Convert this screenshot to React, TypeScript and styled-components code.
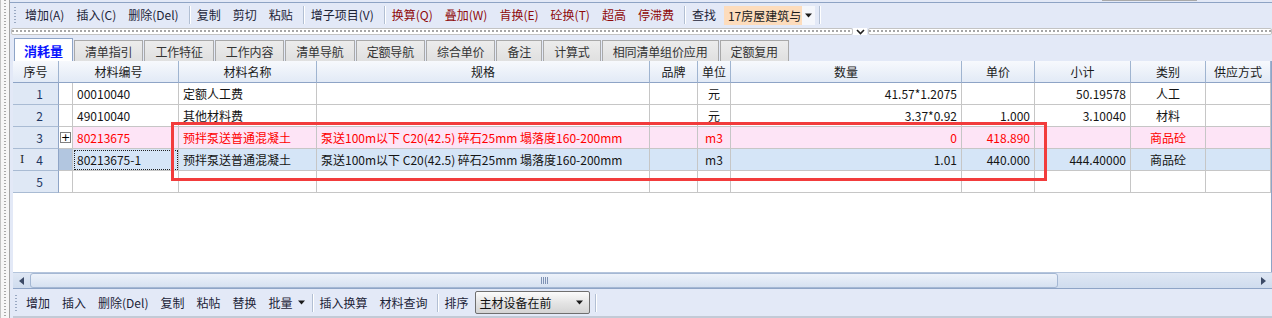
import React from "react";
import styled, { createGlobalStyle } from "styled-components";

const GlobalStyle = createGlobalStyle`
  html, body {
    margin: 0;
    padding: 0;
    background: #e3e9f7;
  }
  body {
    font-family: "Noto Sans CJK SC", "Microsoft YaHei", "Liberation Sans", sans-serif;
    font-size: 12px;
    color: #1c2437;
  }
`;

const cols = [46, 14, 106, 138, 333, 48, 33, 231, 73, 96, 75, 65];
const template = cols.map((c) => `${c}px`).join(" ");

const Frame = styled.div`
  position: relative;
  display: flex;
  width: 1272px;
  height: 318px;
  overflow: hidden;
  background: #e3e9f7;
`;

const SideGrip = styled.div`
  flex: none;
  width: 8px;
  border-left: 1px solid #c4c4c4;
  border-right: 1px solid #a3a3a3;
  background-color: #f6f6f6;
  background-image: repeating-linear-gradient(to bottom, #a8a8a8 0 1px, transparent 1px 3px);
  background-size: 2px 100%;
  background-position: 3px 0;
  background-repeat: no-repeat;
`;

const Main = styled.div`
  flex: 1;
  display: flex;
  flex-direction: column;
  min-width: 0;
`;

const TopEdge = styled.div`
  height: 2px;
  border-bottom: 1px solid #8ea3c4;
  display: flex;
`;

const Nub = styled.div`
  margin-left: 1092px;
  width: 95px;
  height: 1px;
  background: #a9a9a9;
`;

const Toolbar = styled.div<{ $h: number }>`
  height: ${(p) => p.$h}px;
  display: flex;
  align-items: center;
  padding-left: 4px;
  background: #e3e9f7;
  flex: none;
`;

const Grip = styled.div`
  width: 2px;
  height: 16px;
  margin-right: 3px;
  background-image: repeating-linear-gradient(to bottom, #9aa9c2 0 1px, transparent 1px 3px);
`;

const Item = styled.span<{ $red?: boolean }>`
  padding: 0 6px;
  line-height: 18px;
  white-space: nowrap;
  color: ${(p) => (p.$red ? "#8f0a0a" : "#1c2437")};
  display: inline-flex;
  align-items: center;
  gap: 5px;
`;

const Sep = styled.div<{ $lead?: number }>`
  width: 1px;
  height: 18px;
  margin: 0 1px 0 ${(p) => (p.$lead ?? 4)}px;
  background: #b2bfd3;
  box-shadow: 1px 0 0 #fff;
`;

const PeachCombo = styled.div`
  display: flex;
  height: 19px;
  margin-left: 2px;
`;

const PeachText = styled.div`
  width: 74px;
  padding-left: 4px;
  background: #fddcbc;
  line-height: 19px;
  white-space: nowrap;
  overflow: hidden;
  color: #1c1c1c;
`;

const DropBtn = styled.div`
  width: 13px;
  display: flex;
  align-items: center;
  justify-content: center;
  background: #f4f6fb;
`;

const Splitter = styled.div`
  height: 9px;
  display: flex;
  align-items: center;
  flex: none;
`;

const Dots = styled.div<{ $w?: number }>`
  ${(p) => (p.$w ? `width: ${p.$w}px;` : "flex: 1;")}
  height: 5px;
  margin-left: 1px;
  border: 1px solid #c3c3c3;
  border-radius: 2px;
  background-color: #ffffff;
  background-image: repeating-linear-gradient(to right, #a6a6a6 0 2px, transparent 2px 4px);
  background-size: 100% 2px;
  background-position: 0 1px;
  background-repeat: no-repeat;
`;

const ArrowBox = styled.div`
  width: 14px;
  height: 7px;
  display: flex;
  align-items: center;
  justify-content: center;
  background: #ffffff;
`;

const TabStrip = styled.div`
  height: 25px;
  display: flex;
  align-items: flex-end;
  padding-left: 4px;
  flex: none;
`;

const Tab = styled.div<{ $active?: boolean }>`
  height: ${(p) => (p.$active ? 23 : 21)}px;
  padding: 0 ${(p) => (p.$active ? 9 : 10)}px;
  margin-right: 1px;
  box-sizing: border-box;
  display: flex;
  align-items: center;
  justify-content: center;
  white-space: nowrap;
  border: 1px solid ${(p) => (p.$active ? "#8ea4c6" : "#a9a9a9")};
  border-bottom: none;
  background: ${(p) => (p.$active ? "#ffffff" : "linear-gradient(#ececec, #e0e0e0)")};
  color: ${(p) => (p.$active ? "#0a14ff" : "#333333")};
  font-weight: ${(p) => (p.$active ? 700 : 400)};
  font-size: ${(p) => (p.$active ? 13 : 12)}px;
  letter-spacing: ${(p) => (p.$active ? "0" : "-0.15px")};
`;

const Panel = styled.div`
  margin-left: 3px;
  width: 1259px;
  display: flex;
  flex-direction: column;
  flex: none;
`;

const Sheet = styled.div`
  height: 211px;
  background: #ffffff;
  border-right: 1px solid #8ea4c6;
  box-sizing: border-box;
`;

const GridRow = styled.div<{ $bg?: string; $color?: string }>`
  display: grid;
  grid-template-columns: ${template};
  height: 22px;
  background: ${(p) => p.$bg || "transparent"};
  color: ${(p) => p.$color || "#141414"};
`;

const Cell = styled.div<{ $align?: "left" | "center" | "right" }>`
  box-sizing: border-box;
  border-right: 1px solid #c6c6c6;
  border-bottom: 1px solid #c6c6c6;
  padding: 0 4px;
  line-height: 21px;
  white-space: nowrap;
  overflow: hidden;
  text-align: ${(p) => p.$align || "left"};
`;

const HeadCell = styled(Cell)<{ $span?: number }>`
  grid-column: span ${(p) => p.$span || 1};
  text-align: center;
  background: linear-gradient(#f7f9fd, #e2eaf6);
  border-right-color: #9fb4d0;
  border-bottom-color: #8ea4c6;
  color: #1a1a1a;
`;

const RowHead = styled(Cell)`
  position: relative;
  text-align: center;
  padding-left: 12px;
  background: #dfe8f5;
  border-right-color: #8ea4c6;
  border-bottom-color: #a9bbd3;
  color: #1d3561;
`;

const Marker = styled.span`
  position: absolute;
  left: 7px;
  top: 0;
  font-family: "DejaVu Serif", serif;
  font-size: 11px;
  color: #222;
`;

const Expander = styled(Cell)<{ $tone?: "plain" | "deep" }>`
  padding: 0;
  display: flex;
  align-items: center;
  justify-content: center;
  background: ${(p) => (p.$tone === "deep" ? "#b2c6e0" : "#ffffff")};
`;

const PlusBox = styled.div`
  width: 9px;
  height: 9px;
  border: 1px solid #808080;
  background: #fff;
  display: flex;
  align-items: center;
  justify-content: center;
  font-family: "DejaVu Sans", sans-serif;
  font-size: 11px;
  line-height: 9px;
  color: #000;
`;

const FocusCell = styled(Cell)`
  outline: 1px dotted #222;
  outline-offset: -2px;
`;

const HScroll = styled.div`
  height: 17px;
  display: flex;
  align-items: center;
  background: linear-gradient(#dfe7f4, #cfdcee);
  border-top: 1px solid #b5c5dc;
  border-bottom: 1px solid #8ea4c6;
  box-sizing: border-box;
  flex: none;
`;

const ScrollArrow = styled.div`
  width: 17px;
  height: 15px;
  display: flex;
  align-items: center;
  justify-content: center;
`;

const Thumb = styled.div`
  width: 1026px;
  height: 13px;
  border: 1px solid #a4b7d3;
  border-radius: 3px;
  background: linear-gradient(#edf2fa, #d6e1f1);
  display: flex;
  align-items: center;
  justify-content: center;
  gap: 1px;
`;

const GripLine = styled.div`
  width: 1px;
  height: 7px;
  background: #7f92b4;
`;

const Track = styled.div`
  flex: 1;
`;

const BottomBar = styled(Toolbar)`
  padding-left: 2px;
  border-bottom: 2px solid #c3cad6;
`;

const SortCombo = styled.div`
  width: 115px;
  height: 23px;
  margin-left: 0;
  box-sizing: border-box;
  border: 1px solid #6f6f6f;
  border-radius: 2px;
  background: linear-gradient(#fbfbfb, #e3e3e3 55%, #d4d4d4);
  display: flex;
  align-items: center;
  justify-content: space-between;
  padding: 0 6px 0 4px;
  color: #111;
`;

const Annotation = styled.div`
  position: absolute;
  left: 171px;
  top: 122px;
  width: 876px;
  height: 59px;
  box-sizing: border-box;
  border: 3px solid #f23c3c;
  pointer-events: none;
`;

const Caret = ({ size = 7 }: { size?: number }) => (
  <svg width={size} height={Math.ceil(size / 2) + 1} viewBox="0 0 7 4">
    <path d="M0 0 H7 L3.5 4 Z" fill="#1a1a1a" />
  </svg>
);

interface IRow {
  no: string;
  code: string;
  name: string;
  spec: string;
  unit: string;
  qty: string;
  price: string;
  sub: string;
  cat: string;
}

const spec = "泵送100m以下 C20(42.5) 碎石25mm 塌落度160-200mm";

const rows: IRow[] = [
  { no: "1", code: "00010040", name: "定额人工费", spec: "", unit: "元", qty: "41.57*1.2075", price: "", sub: "50.19578", cat: "人工" },
  { no: "2", code: "49010040", name: "其他材料费", spec: "", unit: "元", qty: "3.37*0.92", price: "1.000", sub: "3.10040", cat: "材料" },
  { no: "3", code: "80213675", name: "预拌泵送普通混凝土", spec, unit: "m3", qty: "0", price: "418.890", sub: "", cat: "商品砼" },
  { no: "4", code: "80213675-1", name: "预拌泵送普通混凝土", spec, unit: "m3", qty: "1.01", price: "440.000", sub: "444.40000", cat: "商品砼" },
  { no: "5", code: "", name: "", spec: "", unit: "", qty: "", price: "", sub: "", cat: "" },
];

const topItems: Array<{ t: string; red?: boolean } | "|"> = [
  { t: "增加(A)" }, { t: "插入(C)" }, { t: "删除(Del)" }, "|",
  { t: "复制" }, { t: "剪切" }, { t: "粘贴" }, "|",
  { t: "增子项目(V)" }, "|",
  { t: "换算(Q)", red: true }, { t: "叠加(W)", red: true }, { t: "肯换(E)", red: true },
  { t: "砼换(T)", red: true }, { t: "超高", red: true }, { t: "停滞费", red: true }, "|",
  { t: "查找" },
];

const tabs = ["消耗量", "清单指引", "工作特征", "工作内容", "清单导航", "定额导航", "综合单价", "备注", "计算式", "相同清单组价应用", "定额复用"];

const heads = ["材料名称", "规格", "品牌", "单位", "数量", "单价", "小计", "类别", "供应方式"];

const App = () => {
  return (
    <Frame>
      <GlobalStyle />
      <SideGrip />
      <Main>
        <TopEdge>
          <Nub />
        </TopEdge>
        <Toolbar $h={24}>
          <Grip />
          {topItems.map((it, i) =>
            it === "|" ? <Sep key={i} /> : <Item key={i} $red={it.red}>{it.t}</Item>
          )}
          <PeachCombo>
            <PeachText>17房屋建筑与</PeachText>
            <DropBtn><Caret /></DropBtn>
          </PeachCombo>
          <Sep />
        </Toolbar>

        <Splitter>
          <Dots $w={840} />
          <ArrowBox>
            <svg width="9" height="6" viewBox="0 0 9 6">
              <path d="M1 1 L4.5 4.5 L8 1" stroke="#222" strokeWidth="1.6" fill="none" />
            </svg>
          </ArrowBox>
          <Dots />
        </Splitter>

        <TabStrip>
          {tabs.map((t, i) => (
            <Tab key={t} $active={i === 0}>{t}</Tab>
          ))}
        </TabStrip>

        <Panel>
          <Sheet>
            <GridRow>
              <HeadCell>序号</HeadCell>
              <HeadCell $span={2}>材料编号</HeadCell>
              {heads.map((h) => (
                <HeadCell key={h}>{h}</HeadCell>
              ))}
            </GridRow>
            {rows.map((r) => {
              const pink = r.no === "3";
              const current = r.no === "4";
              const CodeCell = current ? FocusCell : Cell;
              return (
                <GridRow
                  key={r.no}
                  $bg={pink ? "#fde4f6" : current ? "#d5e5f7" : undefined}
                  $color={pink ? "#ff0000" : undefined}
                >
                  <RowHead>
                    {current && <Marker>I</Marker>}
                    {r.no}
                  </RowHead>
                  <Expander $tone={current ? "deep" : "plain"}>
                    {pink && <PlusBox>+</PlusBox>}
                  </Expander>
                  <CodeCell>{r.code}</CodeCell>
                  <Cell>{r.name}</Cell>
                  <Cell>{r.spec}</Cell>
                  <Cell />
                  <Cell $align="center">{r.unit}</Cell>
                  <Cell $align="right">{r.qty}</Cell>
                  <Cell $align="right">{r.price}</Cell>
                  <Cell $align="right">{r.sub}</Cell>
                  <Cell $align="center">{r.cat}</Cell>
                  <Cell />
                </GridRow>
              );
            })}
          </Sheet>

          <HScroll>
            <ScrollArrow>
              <svg width="5" height="8" viewBox="0 0 5 8">
                <path d="M5 0 V8 L0 4 Z" fill="#3c4a66" />
              </svg>
            </ScrollArrow>
            <Thumb>
              <GripLine />
              <GripLine />
              <GripLine />
              <GripLine />
            </Thumb>
            <Track />
            <ScrollArrow>
              <svg width="5" height="8" viewBox="0 0 5 8">
                <path d="M0 0 V8 L5 4 Z" fill="#3c4a66" />
              </svg>
            </ScrollArrow>
          </HScroll>

          <BottomBar $h={27}>
            <Grip />
            <Item>增加</Item>
            <Item>插入</Item>
            <Item>删除(Del)</Item>
            <Item>复制</Item>
            <Item>粘帖</Item>
            <Item>替换</Item>
            <Item>批量<Caret /></Item>
            <Sep $lead={1} />
            <Item>插入换算</Item>
            <Item>材料查询</Item>
            <Sep $lead={3} />
            <Item>排序</Item>
            <SortCombo>
              <span>主材设备在前</span>
              <Caret />
            </SortCombo>
            <Sep $lead={5} />
          </BottomBar>
        </Panel>
      </Main>
      <Annotation />
    </Frame>
  );
};

export default App;
